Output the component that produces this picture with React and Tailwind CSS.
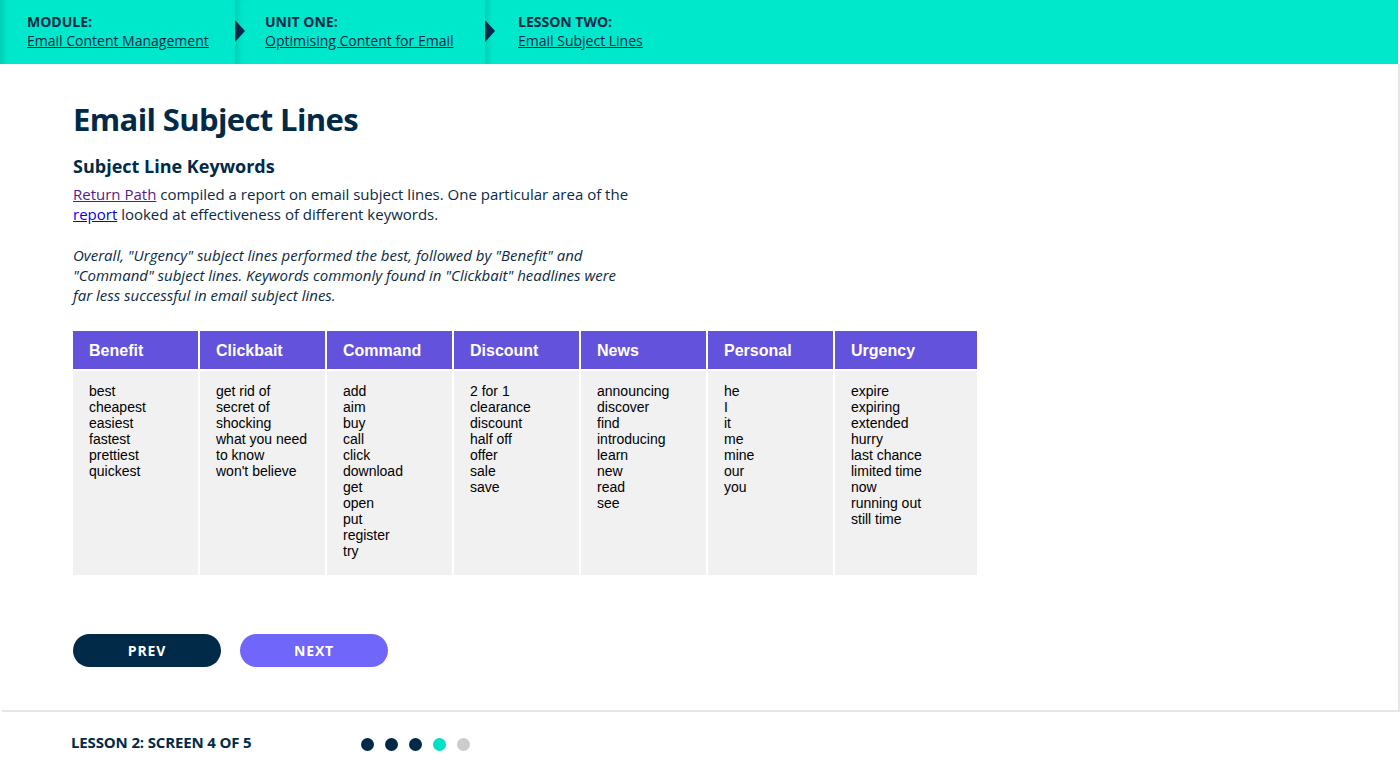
import React from "react";

const cols = [
  { h: "Benefit", items: ["best", "cheapest", "easiest", "fastest", "prettiest", "quickest"] },
  { h: "Clickbait", items: ["get rid of", "secret of", "shocking", "what you need", "to know", "won't believe"] },
  { h: "Command", items: ["add", "aim", "buy", "call", "click", "download", "get", "open", "put", "register", "try"] },
  { h: "Discount", items: ["2 for 1", "clearance", "discount", "half off", "offer", "sale", "save"] },
  { h: "News", items: ["announcing", "discover", "find", "introducing", "learn", "new", "read", "see"] },
  { h: "Personal", items: ["he", "I", "it", "me", "mine", "our", "you"] },
  { h: "Urgency", items: ["expire", "expiring", "extended", "hurry", "last chance", "limited time", "now", "running out", "still time"] },
];

function Crumb({ label, link, className, arrow }) {
  return (
    <div className={"relative h-full flex flex-col justify-center shadow-[inset_7px_0_6px_-4px_rgba(0,0,0,0.13)] " + className}>
      {arrow && (
        <div className="absolute left-0 top-[20px] w-0 h-0 border-l-[10px] border-l-[#002a48] border-y-[11.5px] border-y-transparent" />
      )}
      <div className="text-[14px] leading-[19px] font-bold text-[#002a48]">{label}</div>
      <a href="#" className="text-[14px] leading-[20px] text-[#002a48] underline">{link}</a>
    </div>
  );
}

export default function App() {
  return (
    <div className="w-[1400px] h-[779px] bg-white flex flex-col overflow-hidden" style={{ fontFamily: '"Open Sans", sans-serif' }}>
      <header className="h-[64px] bg-[#00e8cc] flex shrink-0 mr-[2px]">
        <Crumb className="w-[235px] pl-[27px] pb-[2px]" label="MODULE:" link="Email Content Management" />
        <Crumb className="w-[250px] pl-[30px] pb-[2px]" label="UNIT ONE:" link="Optimising Content for Email" arrow />
        <Crumb className="flex-1 pl-[33px] pb-[2px]" label="LESSON TWO:" link="Email Subject Lines" arrow />
      </header>

      <main className="flex-1 border-r-2 border-[#e6e6e6] pl-[73px] pt-[35px]">
        <h1 className="text-[31px] leading-[40px] font-bold tracking-[-0.02em] text-[#002a48]">Email Subject Lines</h1>
        <h2 className="mt-[15px] text-[18px] leading-[24px] font-bold text-[#002a48]">Subject Line Keywords</h2>
        <p className="mt-[6px] max-w-[560px] text-[15px] leading-[20px] text-[#0b2a44]">
          <a href="#" className="text-[#551a8b] underline">Return Path</a> compiled a report on email subject lines. One particular area of the{" "}
          <a href="#" className="text-[#0000ee] underline">report</a> looked at effectiveness of different keywords.
        </p>
        <p className="mt-[21px] max-w-[560px] text-[15px] leading-[20px] italic text-[#0b2a44]">
          Overall, "Urgency" subject lines performed the best, followed by "Benefit" and "Command" subject lines. Keywords commonly found in "Clickbait" headlines were far less successful in email subject lines.
        </p>

        <div
          className="mt-[26px] w-[904px] grid grid-cols-[125px_125px_125px_125px_125px_125px_142px] grid-rows-[38px_204px] gap-[2px]"
          style={{ fontFamily: '"Liberation Sans", Arial, sans-serif' }}
        >
          {cols.map((c) => (
            <div key={c.h} className="bg-[#6352dc] text-white font-bold text-[16px] flex items-center pl-[16px] pt-[2px]">
              {c.h}
            </div>
          ))}
          {cols.map((c) => (
            <div key={c.h + "b"} className="bg-[#f1f1f1] pl-[16px] pt-[12px] text-[14px] leading-[16px] text-black">
              {c.items.map((it) => (
                <div key={it}>{it}</div>
              ))}
            </div>
          ))}
        </div>

        <div className="mt-[59px] flex gap-[19px]">
          <button className="w-[148px] h-[33px] rounded-full bg-[#002a48] text-white text-[14px] font-bold tracking-[0.06em]">PREV</button>
          <button className="w-[148px] h-[33px] rounded-full bg-[#7066fa] text-white text-[14px] font-bold tracking-[0.06em]">NEXT</button>
        </div>
      </main>

      <footer className="h-[69px] shrink-0 border-t-2 border-[#e6e6e6] ml-[2px] flex items-center pl-[69px] pb-[6px]">
        <div className="w-[290px] text-[15px] font-bold tracking-[-0.01em] text-[#002a48]">LESSON 2: SCREEN 4 OF 5</div>
        <div className="flex gap-[11px] mt-[3px]">
          <span className="w-[13px] h-[13px] rounded-full bg-[#002a48]" />
          <span className="w-[13px] h-[13px] rounded-full bg-[#002a48]" />
          <span className="w-[13px] h-[13px] rounded-full bg-[#002a48]" />
          <span className="w-[13px] h-[13px] rounded-full bg-[#00e0c6]" />
          <span className="w-[13px] h-[13px] rounded-full bg-[#cccccc]" />
        </div>
      </footer>
    </div>
  );
}
